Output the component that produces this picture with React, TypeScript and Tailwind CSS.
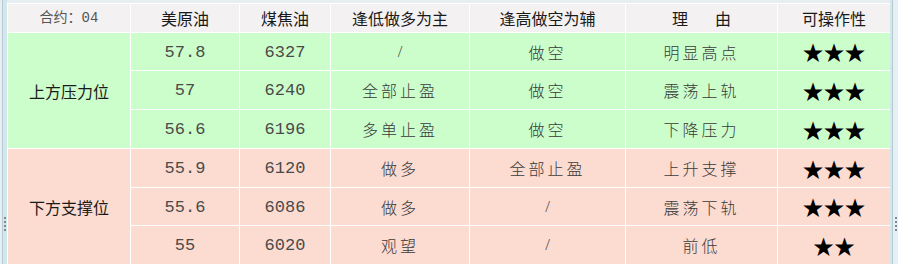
import React from "react";

const stars3 = "★★★";
const stars2 = "★★";

export default function App() {
  const upper = [
    { oil: "57.8", coke: "6327", low: "/", high: "做空", reason: "明显高点", stars: stars3 },
    { oil: "57", coke: "6240", low: "全部止盈", high: "做空", reason: "震荡上轨", stars: stars3 },
    { oil: "56.6", coke: "6196", low: "多单止盈", high: "做空", reason: "下降压力", stars: stars3 },
  ];
  const lower = [
    { oil: "55.9", coke: "6120", low: "做多", high: "全部止盈", reason: "上升支撑", stars: stars3 },
    { oil: "55.6", coke: "6086", low: "做多", high: "/", reason: "震荡下轨", stars: stars3 },
    { oil: "55", coke: "6020", low: "观望", high: "/", reason: "前低", stars: stars2 },
  ];

  const cell = "border border-white text-center align-middle p-0";
  const num = "font-['Courier_New','Liberation_Mono',monospace] text-[17px] text-[#4a4a4a] pt-[2px]";
  const slash = "font-['Liberation_Serif',serif] text-[17px] text-[#555] font-light";
  const cjk = "font-['Noto_Sans_CJK_SC',sans-serif] text-[16px] text-[#3a3a3a] tracking-[3px] font-light";
  const star = "font-['Noto_Sans_CJK_SC',sans-serif] text-[21px] text-black leading-none";

  const renderRows = (rows: typeof upper, label: string, bg: string, heights: string[]) =>
    rows.map((r, i) => (
      <tr key={label + i} className={`${bg} ${heights[i]}`}>
        {i === 0 && (
          <td rowSpan={3} className={`${cell} font-['Noto_Sans_CJK_SC',sans-serif] text-[16px] text-[#1a1a1a]`}>
            {label}
          </td>
        )}
        <td className={`${cell} ${num}`}>{r.oil}</td>
        <td className={`${cell} ${num}`}>{r.coke}</td>
        <td className={`${cell} ${r.low === "/" ? slash : cjk}`}>{r.low}</td>
        <td className={`${cell} ${r.high === "/" ? slash : cjk}`}>{r.high}</td>
        <td className={`${cell} ${cjk}`}>{r.reason}</td>
        <td className={`${cell} ${star}`}>{r.stars}</td>
      </tr>
    ));

  const head = `${cell} font-['Noto_Sans_CJK_SC',sans-serif] text-[16px] font-normal text-[#1a1a1a]`;

  return (
    <div className="w-[898px] h-[264px] overflow-hidden bg-[#dcebf0] flex">
      {/* left splitter */}
      <div className="w-[7px] h-full flex">
        <div className="w-[2px] bg-[#e4f0f4]" />
        <div className="w-[1px] bg-[#b9c9d0]" />
        <div className="w-[4px] bg-[#d3e7ee] flex flex-col items-center justify-start pt-[217px] gap-[2px]">
          <span className="w-[2px] h-[2px] bg-[#7d8a90]" />
          <span className="w-[2px] h-[2px] bg-[#7d8a90]" />
          <span className="w-[2px] h-[2px] bg-[#7d8a90]" />
          <span className="w-[2px] h-[2px] bg-[#7d8a90]" />
        </div>
      </div>

      <div className="w-[883px] pt-[3px] bg-[#e6eef1]">
        <table className="table-fixed border-collapse w-[883px]">
          <colgroup>
            <col className="w-[123px]" />
            <col className="w-[109px]" />
            <col className="w-[91px]" />
            <col className="w-[139px]" />
            <col className="w-[156px]" />
            <col className="w-[152px]" />
            <col className="w-[113px]" />
          </colgroup>
          <thead>
            <tr className="h-[29px] bg-[#f3f1f2]">
              <th className={`${cell} font-['Liberation_Mono','Noto_Sans_CJK_SC',monospace] text-[14px] font-normal text-[#555]`}>
                合约：04
              </th>
              {["美原油", "煤焦油", "逢低做多为主", "逢高做空为辅"].map((h) => (
                <th key={h} className={head}>
                  {h}
                </th>
              ))}
              <th className={head}>
                <span className="inline-flex items-center">
                  理<span className="w-[27px]" />由
                </span>
              </th>
              <th className={head}>可操作性</th>
            </tr>
          </thead>
          <tbody>
            {renderRows(upper, "上方压力位", "bg-[#ccfecb]", ["h-[38px]", "h-[39px]", "h-[39px]"])}
            {renderRows(lower, "下方支撑位", "bg-[#fcdbd0]", ["h-[39px]", "h-[38px]", "h-[39px]"])}
          </tbody>
        </table>
      </div>

      {/* right splitter */}
      <div className="w-[8px] h-full flex">
        <div className="w-[2px] bg-[#d3e7ee]" />
        <div className="w-[1px] bg-[#b9c9d0]" />
        <div className="w-[5px] bg-[#e4f0f4] flex flex-col items-center pt-[217px] gap-[2px]">
          <span className="w-[2px] h-[2px] bg-[#7d8a90]" />
          <span className="w-[2px] h-[2px] bg-[#7d8a90]" />
          <span className="w-[2px] h-[2px] bg-[#7d8a90]" />
          <span className="w-[2px] h-[2px] bg-[#7d8a90]" />
        </div>
      </div>
    </div>
  );
}
